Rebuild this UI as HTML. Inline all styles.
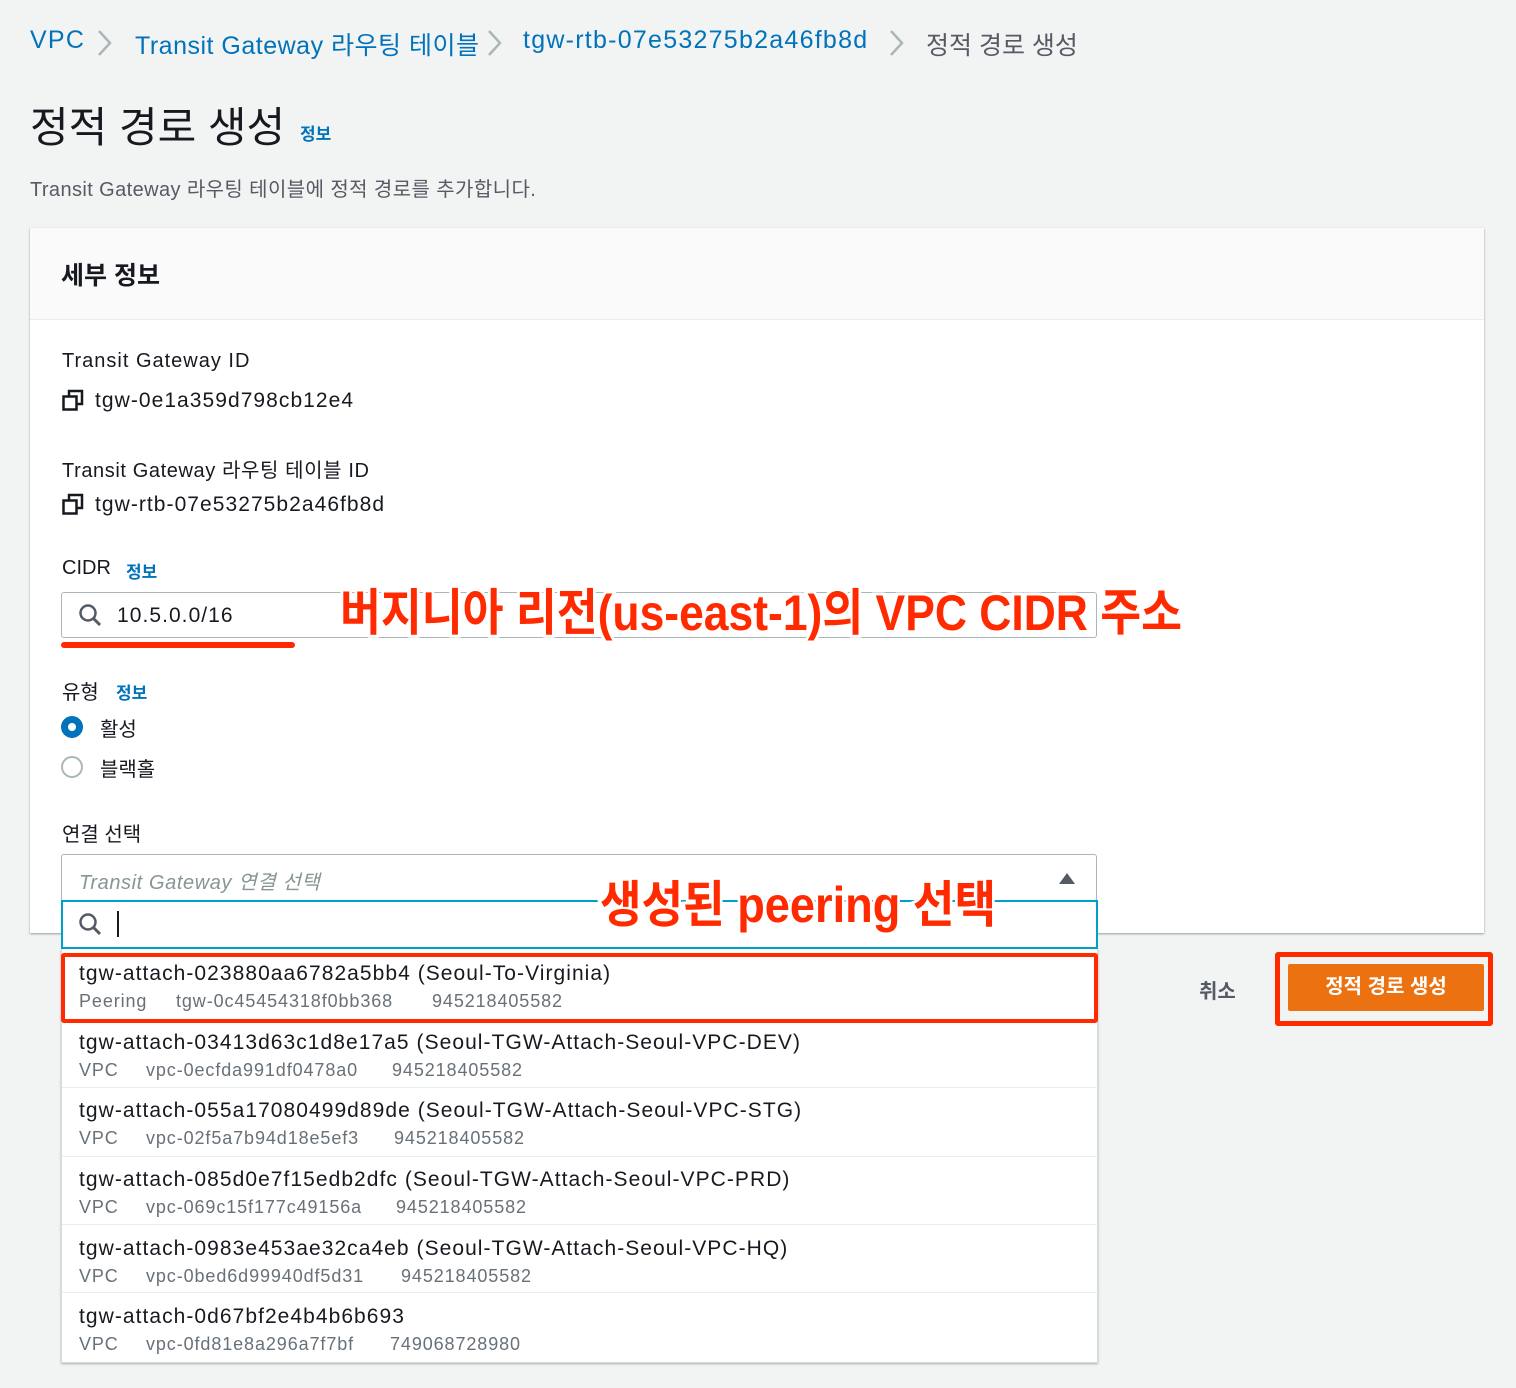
<!DOCTYPE html>
<html><head><meta charset="utf-8"><style>
*{margin:0;padding:0;box-sizing:border-box}
body{width:1516px;height:1388px;background:#f2f3f3;font-family:"Liberation Sans","Noto Sans CJK KR",sans-serif;color:#16191f;position:relative;overflow:hidden}
.a{position:absolute;white-space:nowrap}
.l{letter-spacing:0.05em}
.bc{top:26px;font-size:25px;color:#0073bb}
.blue{color:#0073bb}
.panel{position:absolute;left:30px;top:228px;width:1454px;height:705px;background:#fff;box-shadow:0 1px 2px rgba(0,28,36,.4)}
.ph{position:absolute;left:0;top:0;width:100%;height:92px;border-bottom:1px solid #eaeded;background:#fafafa}
.lbl{font-size:20px;color:#16191f}
.info{font-size:17px;font-weight:bold;color:#0073bb}
.row{position:absolute;left:0;width:1036px;border-top:1px solid #eaeded}
.row .t{position:absolute;left:17px;top:10px;font-size:21px;color:#16191f;white-space:nowrap;letter-spacing:0.05em}
.row .s{position:absolute;top:42px;font-size:18px;color:#687078;white-space:nowrap;letter-spacing:0.05em}
</style></head><body>
<div class="a bc l" style="left:30px">VPC</div>
<svg class="a" style="left:95px;top:28px" width="20" height="30"><path d="M4 3 L15 15 L4 27" stroke="#aab7b8" stroke-width="2.5" fill="none"/></svg>
<div class="a bc" style="left:135px;letter-spacing:0.02em">Transit Gateway 라우팅 테이블</div>
<svg class="a" style="left:485px;top:28px" width="20" height="30"><path d="M4 3 L15 15 L4 27" stroke="#aab7b8" stroke-width="2.5" fill="none"/></svg>
<div class="a bc l" style="left:523px">tgw-rtb-07e53275b2a46fb8d</div>
<svg class="a" style="left:887px;top:28px" width="20" height="30"><path d="M4 3 L15 15 L4 27" stroke="#aab7b8" stroke-width="2.5" fill="none"/></svg>
<div class="a" style="left:926px;top:26px;font-size:25px;color:#545b64">정적 경로 생성</div>

<div class="a" style="left:30px;top:94px;font-size:42px;color:#16191f">정적 경로 생성</div>
<div class="a info" style="left:300px;top:120px">정보</div>
<div class="a" style="left:30px;top:173px;font-size:20px;color:#545b64;letter-spacing:0.02em">Transit Gateway 라우팅 테이블에 정적 경로를 추가합니다.</div>

<div class="panel"><div class="ph"></div>
<div class="a" style="left:31px;top:28px;font-size:25px;font-weight:bold">세부 정보</div>
</div>

<div class="a lbl l" style="left:62px;top:350px">Transit Gateway ID</div>
<svg class="a" style="left:62px;top:389px" width="24" height="24"><rect x="1.5" y="7.5" width="13" height="13" fill="none" stroke="#16191f" stroke-width="2.5"/><path d="M7 7 V2 H20 V15 H15" fill="none" stroke="#16191f" stroke-width="2.5"/></svg>
<div class="a l" style="left:95px;top:389px;font-size:21px">tgw-0e1a359d798cb12e4</div>
<div class="a lbl" style="left:62px;top:454px;letter-spacing:0.03em">Transit Gateway 라우팅 테이블 ID</div>
<svg class="a" style="left:62px;top:493px" width="24" height="24"><rect x="1.5" y="7.5" width="13" height="13" fill="none" stroke="#16191f" stroke-width="2.5"/><path d="M7 7 V2 H20 V15 H15" fill="none" stroke="#16191f" stroke-width="2.5"/></svg>
<div class="a l" style="left:95px;top:493px;font-size:21px">tgw-rtb-07e53275b2a46fb8d</div>

<div class="a lbl" style="left:62px;top:557px">CIDR</div>
<div class="a info" style="left:126px;top:558px">정보</div>
<div class="a" style="left:61px;top:592px;width:1036px;height:46px;border:1px solid #aab7b8;border-radius:3px;background:#fff"></div>
<svg class="a" style="left:78px;top:603px" width="26" height="26"><circle cx="10" cy="10" r="7.5" fill="none" stroke="#545b64" stroke-width="2.5"/><path d="M15.5 15.5 L22 22" stroke="#545b64" stroke-width="3"/></svg>
<div class="a l" style="left:117px;top:604px;font-size:21px">10.5.0.0/16</div>
<div class="a" style="left:61px;top:642px;width:234px;height:6px;background:#ff2a00;border-radius:3px"></div>

<div class="a lbl" style="left:62px;top:676px">유형</div>
<div class="a info" style="left:116px;top:679px">정보</div>
<div class="a" style="left:61px;top:716px;width:22px;height:22px;border-radius:50%;background:#0073bb"><div style="position:absolute;left:7px;top:7px;width:8px;height:8px;border-radius:50%;background:#fff"></div></div>
<div class="a" style="left:100px;top:713px;font-size:20px">활성</div>
<div class="a" style="left:61px;top:756px;width:22px;height:22px;border-radius:50%;border:2px solid #aab7b8;background:#fff"></div>
<div class="a" style="left:100px;top:753px;font-size:20px">블랙홀</div>

<div class="a lbl" style="left:62px;top:818px">연결 선택</div>
<div class="a" style="left:61px;top:854px;width:1036px;height:48px;border:1px solid #aab7b8;border-radius:3px 3px 0 0;background:#fff"></div>
<div class="a" style="left:79px;top:866px;font-size:20px;font-style:italic;color:#879596;letter-spacing:0.03em">Transit Gateway 연결 선택</div>
<svg class="a" style="left:1057px;top:870px" width="20" height="16"><path d="M2 14 L10 3 L18 14 Z" fill="#545b64"/></svg>
<div class="a" style="left:61px;top:900px;width:1037px;height:49px;border:2px solid #00a1c9;background:#fff"></div>
<svg class="a" style="left:78px;top:912px" width="26" height="26"><circle cx="10" cy="10" r="7.5" fill="none" stroke="#545b64" stroke-width="2.5"/><path d="M15.5 15.5 L22 22" stroke="#545b64" stroke-width="3"/></svg>
<div class="a" style="left:117px;top:911px;width:2px;height:26px;background:#16191f"></div>

<div class="a" style="left:61px;top:949px;width:1037px;height:414px;background:#fff;border:1px solid #d5dbdb;border-top:none;box-shadow:0 1px 2px rgba(0,28,36,.3)">
<div class="row" style="top:0;height:73px;border:none"><div class="t" style="top:13px">tgw-attach-023880aa6782a5bb4 (Seoul-To-Virginia)</div><div class="s" style="left:17px;top:42px">Peering</div><div class="s" style="left:114px;top:42px">tgw-0c45454318f0bb368</div><div class="s" style="left:370px;top:42px">945218405582</div></div>
<div class="row" style="top:73px;height:65px;border:none"><div class="t" style="top:9px">tgw-attach-03413d63c1d8e17a5 (Seoul-TGW-Attach-Seoul-VPC-DEV)</div><div class="s" style="left:17px;top:38px">VPC</div><div class="s" style="left:84px;top:38px">vpc-0ecfda991df0478a0</div><div class="s" style="left:330px;top:38px">945218405582</div></div>
<div class="row" style="top:138px;height:69px"><div class="t" style="top:11px">tgw-attach-055a17080499d89de (Seoul-TGW-Attach-Seoul-VPC-STG)</div><div class="s" style="left:17px;top:40px">VPC</div><div class="s" style="left:84px;top:40px">vpc-02f5a7b94d18e5ef3</div><div class="s" style="left:332px;top:40px">945218405582</div></div>
<div class="row" style="top:207px;height:68px"><div class="t" style="top:11px">tgw-attach-085d0e7f15edb2dfc (Seoul-TGW-Attach-Seoul-VPC-PRD)</div><div class="s" style="left:17px;top:40px">VPC</div><div class="s" style="left:84px;top:40px">vpc-069c15f177c49156a</div><div class="s" style="left:334px;top:40px">945218405582</div></div>
<div class="row" style="top:275px;height:69px"><div class="t" style="top:12px">tgw-attach-0983e453ae32ca4eb (Seoul-TGW-Attach-Seoul-VPC-HQ)</div><div class="s" style="left:17px;top:41px">VPC</div><div class="s" style="left:84px;top:41px">vpc-0bed6d99940df5d31</div><div class="s" style="left:339px;top:41px">945218405582</div></div>
<div class="row" style="top:343px;height:70px"><div class="t" style="top:12px">tgw-attach-0d67bf2e4b4b6b693</div><div class="s" style="left:17px;top:41px">VPC</div><div class="s" style="left:84px;top:41px">vpc-0fd81e8a296a7f7bf</div><div class="s" style="left:328px;top:41px">749068728980</div></div>
</div>
<div class="a" style="left:61px;top:953px;width:1037px;height:70px;border:4px solid #ff2a00;border-radius:3px"></div>

<div class="a" style="left:1199px;top:975px;font-size:20px;font-weight:bold;color:#545b64">취소</div>
<div class="a" style="left:1275px;top:952px;width:218px;height:74px;border:5px solid #ff2a00;border-radius:3px"></div>
<div class="a" style="left:1288px;top:964px;width:196px;height:47px;background:#ec7211;border-radius:2px;color:#fff;font-weight:bold;font-size:20px;text-align:center;line-height:47px">정적 경로 생성</div>

<svg class="a" style="left:330px;top:582px" width="870" height="64"><text x="10" y="48" font-family="Liberation Sans,Noto Sans CJK KR,sans-serif" font-weight="bold" font-size="50" fill="#ff2a00" stroke="#fff" stroke-width="6" paint-order="stroke" textLength="842" lengthAdjust="spacingAndGlyphs">버지니아 리전(us-east-1)의 VPC CIDR 주소</text></svg>
<svg class="a" style="left:592px;top:872px" width="420" height="72"><text x="8" y="50" font-family="Liberation Sans,Noto Sans CJK KR,sans-serif" font-weight="bold" font-size="50" fill="#ff2a00" stroke="#fff" stroke-width="6" paint-order="stroke" textLength="396" lengthAdjust="spacingAndGlyphs">생성된 peering 선택</text></svg>
</body></html>
